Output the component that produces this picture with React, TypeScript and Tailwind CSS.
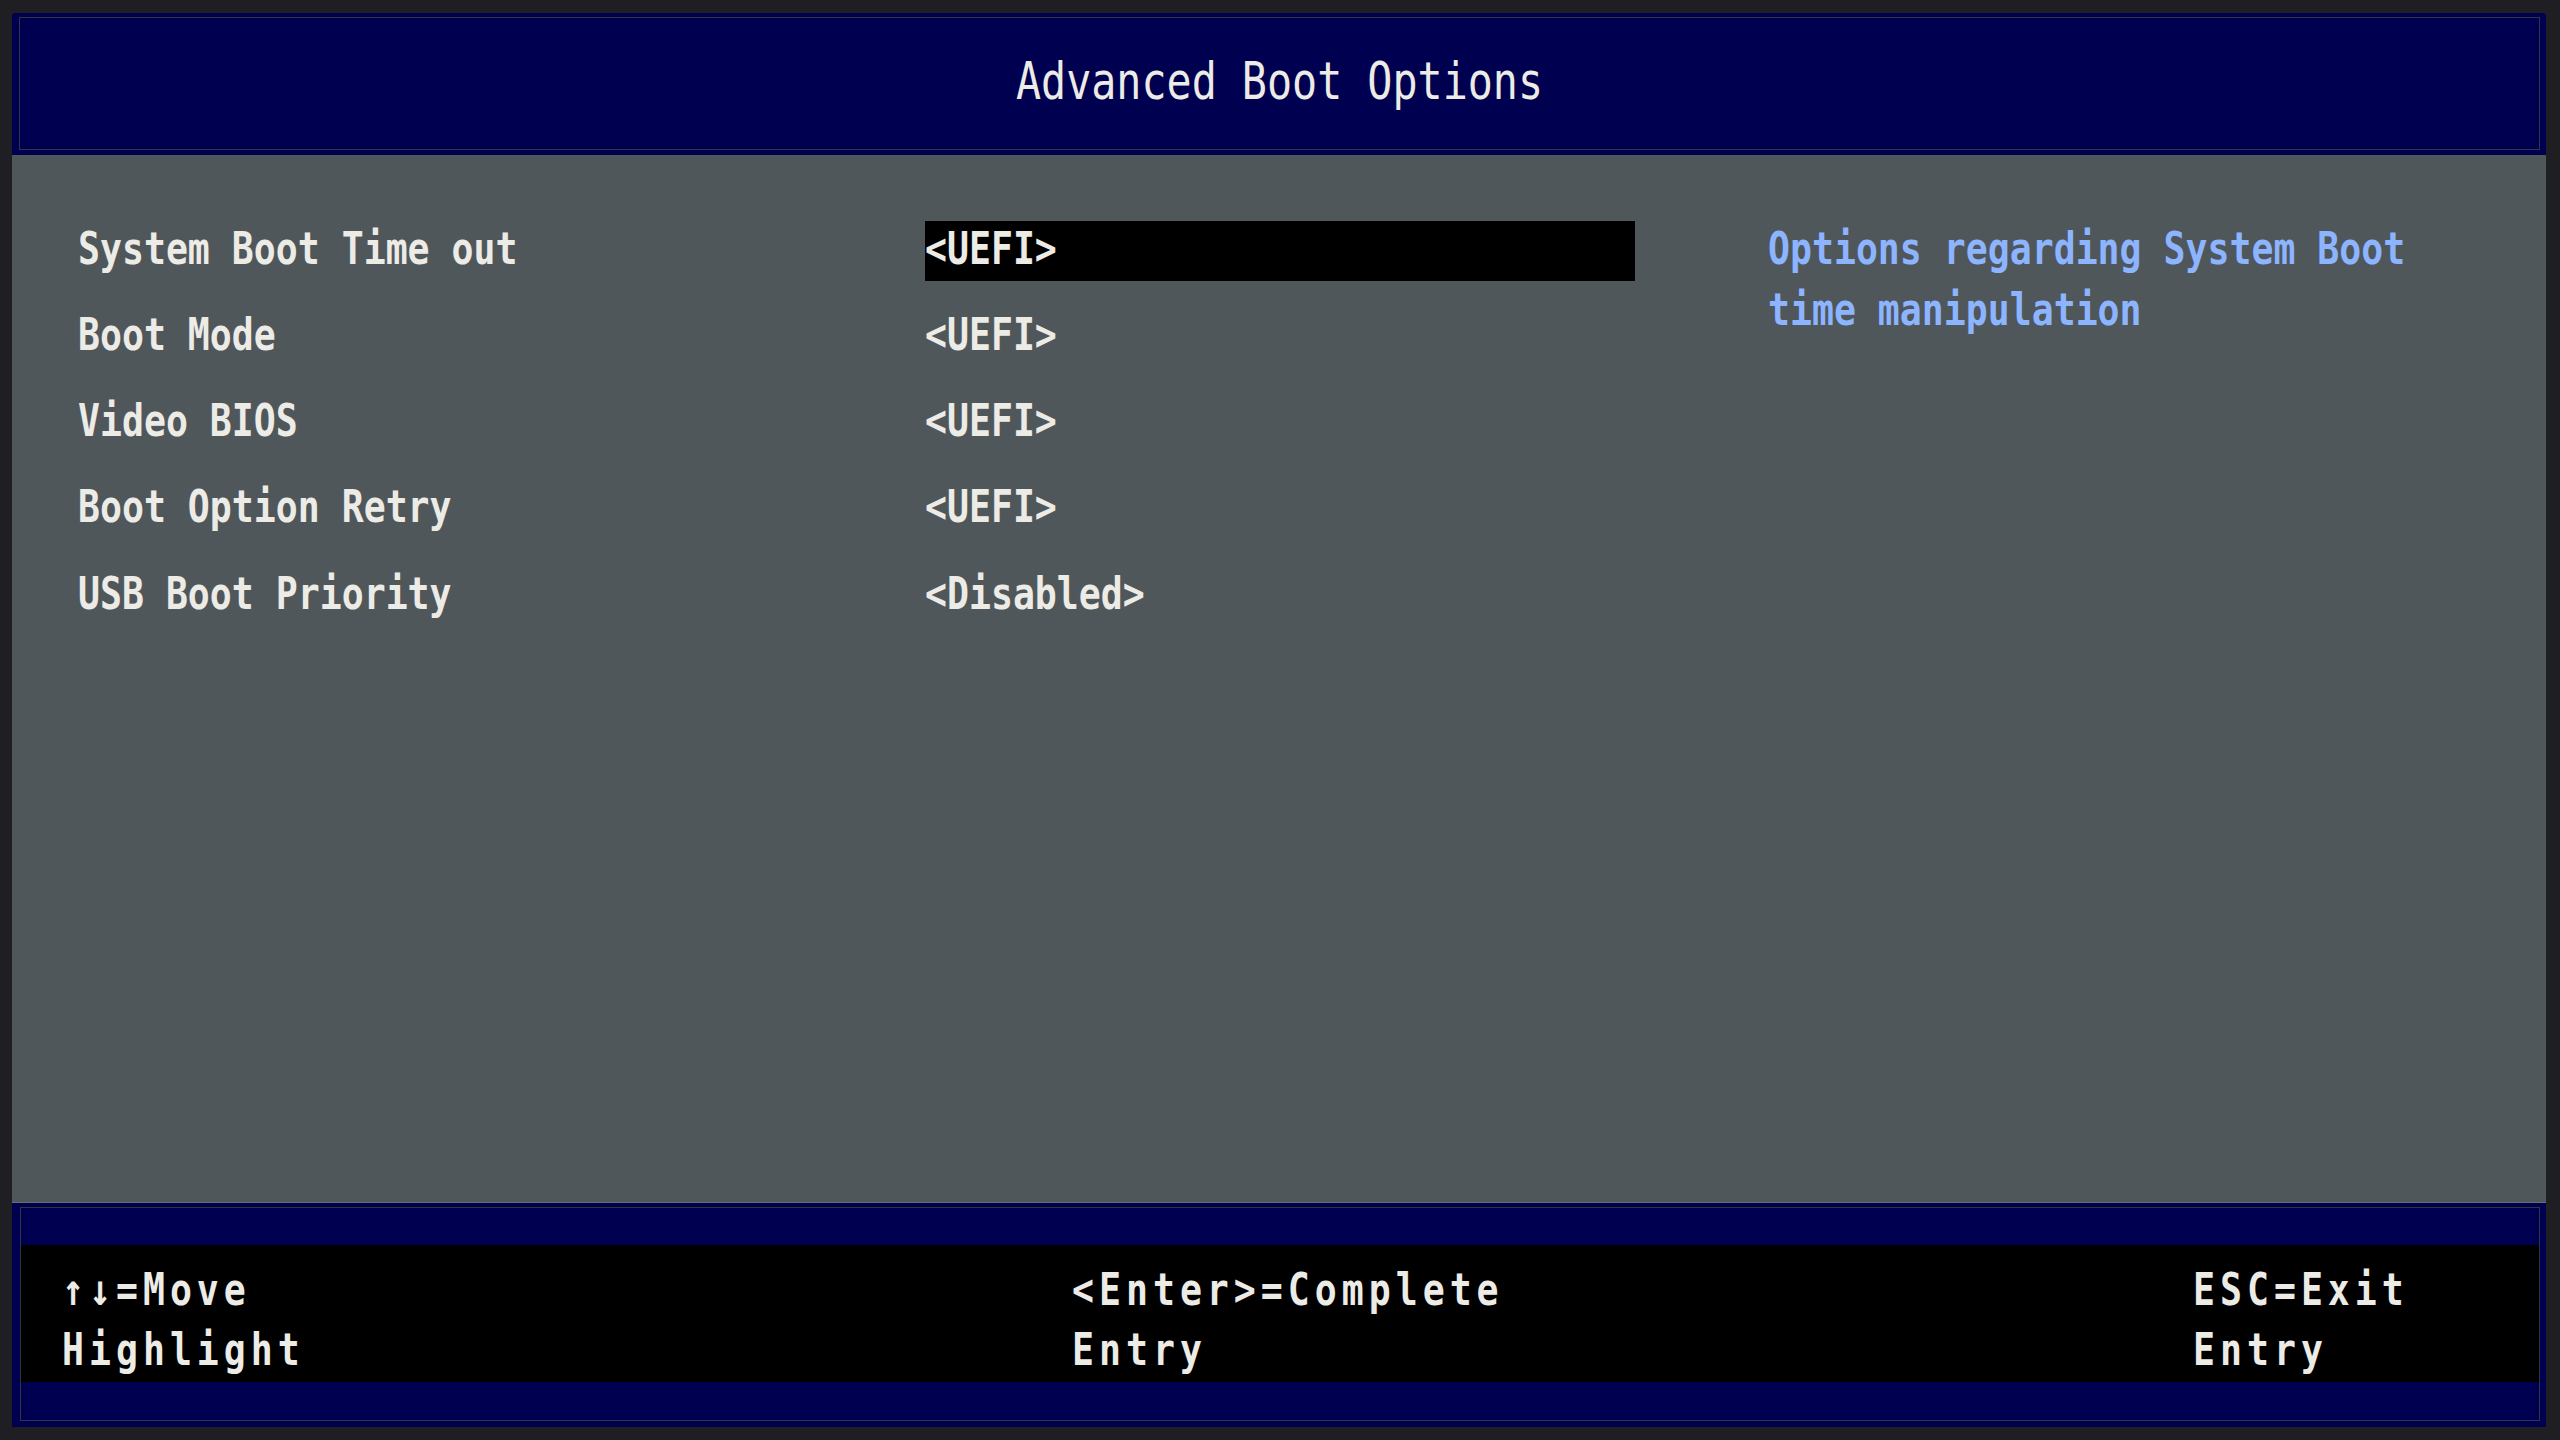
import React from "react";

const mono = "font-['DejaVu_Sans_Mono','Liberation_Mono',monospace]";

const rows = [
  { label: "System Boot Time out", value: "<UEFI>", selected: true },
  { label: "Boot Mode", value: "<UEFI>" },
  { label: "Video BIOS", value: "<UEFI>" },
  { label: "Boot Option Retry", value: "<UEFI>" },
  { label: "USB Boot Priority", value: "<Disabled>" },
];

const footer = [
  { w: "w-[1010px]", lines: ["↑↓=Move", "Highlight"] },
  { w: "w-[1121px]", lines: ["<Enter>=Complete", "Entry"] },
  { w: "flex-1", lines: ["ESC=Exit", "Entry"] },
];

function Tall({ children, className = "" }: { children: React.ReactNode; className?: string }) {
  // bios font is taller than it is wide
  return (
    <span className={`inline-block scale-y-[1.2] whitespace-pre ${className}`}>
      {children}
    </span>
  );
}

export default function App() {
  return (
    <div className={`w-screen h-screen bg-[#1f1f23] pt-[13px] pl-[12px] pr-[14px] ${mono}`}>
      <div className="flex flex-col h-[1414px] rounded-t-[4px] overflow-hidden bg-[#000050]">
        {/* header */}
        <div className="h-[142px] pt-[4px] pl-[7px] pr-[6px] pb-[5px] bg-[#000050]">
          <div className="h-full border border-[#34343e] flex items-center justify-center pb-[4px]">
            <Tall className="text-[41.7px] leading-[50px] text-[#ecebe6] scale-y-[1.22]">
              Advanced Boot Options
            </Tall>
          </div>
        </div>

        {/* body */}
        <div className="flex-1 bg-[#50575b] flex pl-[66px]">
          <div className="flex flex-col gap-[26.3px] pt-[66px] w-[1690px]">
            {rows.map((r) => (
              <div key={r.label} className="grid grid-cols-[847px_710px] h-[60px]">
                <div className="flex items-center pb-[3px]">
                  <Tall className="text-[36.5px] leading-[50px] font-bold text-[#ecebe6]">
                    {r.label}
                  </Tall>
                </div>
                <div className={`flex items-center pb-[3px] ${r.selected ? "bg-black" : ""}`}>
                  <Tall className="text-[36.5px] leading-[50px] font-bold text-[#ecebe6]">
                    {r.value}
                  </Tall>
                </div>
              </div>
            ))}
          </div>
          <div className="flex flex-col pt-[64px] text-[36.5px] leading-[61px] font-bold text-[#8cb4ff]">
            <Tall>Options regarding System Boot</Tall>
            <Tall className="w-fit">time manipulation</Tall>
          </div>
        </div>

        {/* footer */}
        <div className="h-[225px] border-t border-[#6c6c70] bg-[#000050] pt-[4px] pl-[8px] pr-[6px] pb-[1px]">
          <div className="h-[214px] border border-[#34343e] flex flex-col">
            <div className="h-[37px] bg-[#000050]" />
            <div className="h-[137px] bg-black flex pl-[41px] pt-[16px]">
              {footer.map((c, i) => (
                <div key={i} className={`${c.w} flex flex-col`}>
                  {c.lines.map((l) => (
                    <div key={l} className="h-[60px] flex items-center">
                      <Tall className="text-[36.5px] leading-[50px] font-bold tracking-[5px] text-[#ecebe6]">
                        {l}
                      </Tall>
                    </div>
                  ))}
                </div>
              ))}
            </div>
            <div className="flex-1 bg-[#000050]" />
          </div>
        </div>
      </div>
    </div>
  );
}
